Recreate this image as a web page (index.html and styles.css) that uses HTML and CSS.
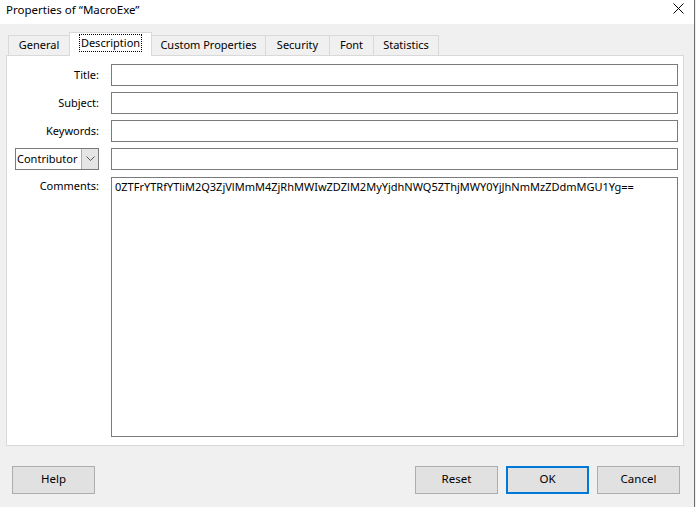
FILE: index.html
```html
<!DOCTYPE html>
<html>
<head>
<meta charset="utf-8">
<title>Properties of "MacroExe"</title>
<link rel="stylesheet" href="styles.css">
</head>
<body>
<div class="window">
  <div class="titlebar">
    <span class="title">Properties of “MacroExe”</span>
    <span class="close">
      <svg width="11" height="11" viewBox="0 0 11 11"><path d="M0.5 0.5 L10.5 10.5 M10.5 0.5 L0.5 10.5" stroke="#000" stroke-width="1" fill="none"/></svg>
    </span>
  </div>
  <div class="tabs">
    <div class="tab t-general">General</div>
    <div class="tab t-desc active"><span class="focus">Description</span></div>
    <div class="tab t-custom">Custom Properties</div>
    <div class="tab t-security">Security</div>
    <div class="tab t-font">Font</div>
    <div class="tab t-stats">Statistics</div>
  </div>
  <div class="panel">
    <div class="form">
      <label class="lbl">Title:</label>
      <div class="input"></div>
      <label class="lbl">Subject:</label>
      <div class="input"></div>
      <label class="lbl">Keywords:</label>
      <div class="input"></div>
      <div class="combo">
        <span class="combo-text">Contributor</span>
        <span class="combo-btn">
          <svg width="9" height="6" viewBox="0 0 9 6"><path d="M0.5 0.5 L4.5 4.5 L8.5 0.5" stroke="#555" stroke-width="1" fill="none"/></svg>
        </span>
      </div>
      <div class="input"></div>
      <label class="lbl lbl-top">Comments:</label>
      <div class="input textarea">0ZTFrYTRfYTliM2Q3ZjVlMmM4ZjRhMWIwZDZlM2MyYjdhNWQ5ZThjMWY0YjJhNmMzZDdmMGU1Yg==</div>
    </div>
  </div>
  <div class="footer">
    <button class="btn">Help</button>
    <button class="btn push">Reset</button>
    <button class="btn default">OK</button>
    <button class="btn">Cancel</button>
  </div>
</div>
</body>
</html>
```
FILE: styles.css
```css
html, body {
  margin: 0;
  padding: 0;
}
body {
  width: 696px;
  height: 507px;
  background: #f0f0f0;
  font-family: "Segoe UI", "Noto Sans", "Open Sans", sans-serif;
  font-size: 11px;
  color: #000;
  overflow: hidden;
}
.window {
  width: 694px;
  height: 507px;
  border-right: 1px solid #6b6b6b;
  display: flex;
  flex-direction: column;
}
.titlebar {
  height: 24px;
  background: #fff;
  display: flex;
  align-items: center;
  justify-content: space-between;
  padding-left: 6px;
  padding-right: 10px;
}
.title {
  line-height: 24px;
  font-size: 11.5px;
  margin-top: -4px;
}
.close {
  display: flex;
  align-items: center;
  height: 24px;
  margin-top: -7px;
}
.tabs {
  height: 31px;
  display: flex;
  align-items: flex-end;
  padding-left: 8px;
}
.tab {
  box-sizing: border-box;
  height: 20px;
  border: 1px solid #d9d9d9;
  border-bottom: none;
  margin-right: -1px;
  display: flex;
  align-items: center;
  justify-content: center;
  background: #f0f0f0;
  padding-bottom: 2px;
}
.tab.active {
  height: 24px;
  background: #fff;
  margin-bottom: -1px;
  position: relative;
  z-index: 1;
  padding-bottom: 3px;
}
.focus {
  outline: 1px dotted #000;
  outline-offset: 0;
  padding: 0 1px;
  line-height: 16px;
}
.t-general { width: 62px; }
.t-desc { width: 83px; }
.t-custom { width: 115px; }
.t-security { width: 65px; }
.t-font { width: 45px; }
.t-stats { width: 66px; }

.panel {
  box-sizing: border-box;
  margin-left: 6px;
  width: 678px;
  height: 391px;
  background: #fff;
  border: 1px solid #d9d9d9;
  padding: 8px 5px 0 8px;
}
.form {
  display: grid;
  grid-template-columns: 84px 1fr;
  grid-template-rows: 22px 22px 22px 22px 261px;
  column-gap: 12px;
  row-gap: 6px;
}
.lbl {
  display: flex;
  align-items: center;
  justify-content: flex-end;
  padding-bottom: 2px;
}
.lbl-top {
  align-items: flex-start;
  padding-top: 1px;
  padding-bottom: 0;
  margin-top: 1px;
}
.input {
  box-sizing: border-box;
  border: 1px solid #7a7a7a;
  background: #fff;
}
.textarea {
  margin-top: 1px;
  padding: 1px 3px;
  line-height: 16px;
  white-space: nowrap;
  overflow: hidden;
}
.combo {
  box-sizing: border-box;
  display: flex;
  align-items: stretch;
  border: 1px solid #7a7a7a;
  background: #fff;
}
.combo-text {
  flex: 1;
  display: flex;
  align-items: center;
  padding-left: 1px;
  padding-bottom: 2px;
}
.combo-btn {
  width: 16px;
  margin: 0;
  background: #e5e5e5;
  border-left: 1px solid #acacac;
  display: flex;
  align-items: center;
  justify-content: center;
}
.footer {
  display: flex;
  padding: 20px 14px 0 12px;
  gap: 8px;
}
.btn {
  box-sizing: border-box;
  width: 83px;
  height: 28px;
  background: #e1e1e1;
  border: 1px solid #adadad;
  font-family: inherit;
  font-size: 11.5px;
  color: #000;
  padding: 0 0 3px 0;
  margin: 0;
}
.push {
  margin-left: auto;
}
.default {
  border: 2px solid #0078d7;
}
```
